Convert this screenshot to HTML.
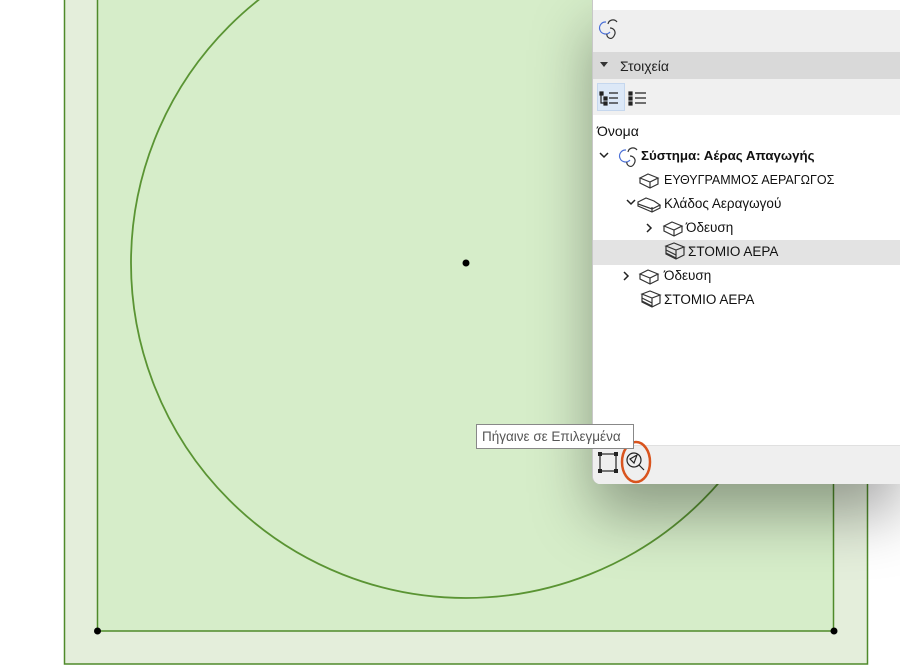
<!DOCTYPE html>
<html><head><meta charset="utf-8"><style>
*{margin:0;padding:0;box-sizing:border-box}
body{width:900px;height:672px;overflow:hidden;background:#fff;position:relative;font-family:"Liberation Sans","DejaVu Sans",sans-serif;font-size:13px;color:#111}
.a{position:absolute}
.t{position:absolute;white-space:nowrap;line-height:16px}
</style></head><body>
<svg class="a" style="left:0;top:0" width="900" height="672">
<rect x="64.5" y="-2" width="803" height="666" fill="#e4eedb" stroke="#4f8a2a" stroke-width="1.5"/>
<rect x="97.5" y="-2" width="736" height="633" fill="#d6edc9" stroke="#4f8a2a" stroke-width="1.5"/>
<circle cx="466" cy="263" r="335" fill="none" stroke="#5a9433" stroke-width="1.8"/>
<circle cx="466" cy="263" r="3.5" fill="#000"/>
<circle cx="97.5" cy="631" r="3.5" fill="#000"/>
<circle cx="834" cy="631" r="3.5" fill="#000"/>
</svg>
<div class="a" style="left:592px;top:0;width:308px;height:484px;background:#fff;border-bottom-left-radius:8px;border-left:1px solid #c8c8c8;overflow:hidden;box-shadow:0 30px 60px rgba(0,0,0,0.35)">
 <div class="a" style="left:0;top:10px;width:308px;height:42px;background:#efefef"></div>
 <div class="a" style="left:0;top:52px;width:308px;height:27px;background:#d9d9d9"></div>
 <div class="a" style="left:0;top:79px;width:308px;height:36px;background:#f0f0f0"></div>
 <div class="a" style="left:0;top:240px;width:308px;height:25px;background:#e3e3e3"></div>
 <div class="a" style="left:0;top:445px;width:308px;height:39px;background:#efefef;border-top:1px solid #e0e0e0"></div>
 <div class="a" style="left:4px;top:83px;width:28px;height:28px;background:#dce8f7;border:1px solid #c5d7ee"></div>
</div>
<svg class="a" style="left:592px;top:0" width="308" height="484" fill="none" stroke="#333" stroke-width="1.2">
 <g stroke="#4a6fd6"><path d="M14 22a6 6 0 1 0 4 10"/></g><path d="M16 24a5 5 0 0 1 9-2M18 28c3 0 7 3 4 8s-8 1-7-2"/>
 <path d="M8 62l8 0-4 5z" fill="#333" stroke="none"/>
 <g stroke="#222"><rect x="8" y="92" width="3" height="3" fill="#222"/><rect x="12" y="97" width="3" height="3" fill="#222"/><rect x="12" y="102" width="3" height="3" fill="#222"/><path d="M9 95v8h3M17 93h9M17 98h9M17 103h9"/>
 <rect x="37" y="92" width="3" height="3" fill="#222"/><rect x="37" y="97" width="3" height="3" fill="#222"/><rect x="37" y="102" width="3" height="3" fill="#222"/><path d="M43 93h11M43 98h11M43 103h11"/></g>
 <path d="M8 153l4 4 4-4M35 200l4 4 4-4M55 224l4 4-4 4M32 272l4 4-4 4" stroke="#222" stroke-width="1.5"/>
 <g stroke="#4a6fd6"><path d="M34 150a6 6 0 1 0 4 10"/></g><path d="M36 152a5 5 0 0 1 9-2M38 156c3 0 7 3 4 8s-8 1-7-2"/>
 <g stroke="#333"><path d="M48 178l8-4 10 4-8 4zM48 178v5l10 5 8-4v-6M58 182v6"/>
 <path d="M46 202l8-4 8 3 6 4-8 4-14-5zM46 202v4l14 6 8-4v-3M60 207v5"/>
 <path d="M72 226l8-4 10 4-8 4zM72 226v5l10 5 8-4v-6M82 230v6"/>
 <path d="M74 246l8-3 10 4-8 3zM74 246v8l10 5 8-4v-8M84 250v9M74 250l10 5M74 253l10 5"/>
 <path d="M48 274l8-4 10 4-8 4zM48 274v5l10 5 8-4v-6M58 278v6"/>
 <path d="M50 294l8-3 10 4-8 3zM50 294v8l10 5 8-4v-8M60 298v9M50 298l10 5M50 301l10 5"/></g>
 <rect x="8" y="454" width="16" height="17" stroke="#222"/>
 <g fill="#222" stroke="none"><rect x="6" y="452" width="4" height="4"/><rect x="22" y="452" width="4" height="4"/><rect x="6" y="469" width="4" height="4"/><rect x="22" y="469" width="4" height="4"/></g>
 <circle cx="42" cy="460" r="7" stroke="#222"/><path d="M47 465l5 5M38 459l7-4-3 8z" stroke="#222"/>
 <ellipse cx="44" cy="462" rx="14" ry="20" stroke="#d9541e" stroke-width="2.5"/>
</svg>
<div class="t" style="left:620px;top:58px;color:#222;font-size:14px">Στοιχεία</div>
<div class="t" style="left:597px;top:123px;font-size:14px">Όνομα</div>
<div class="t" style="left:641px;top:148px;font-weight:bold;font-size:13.3px">Σύστημα: Αέρας Απαγωγής</div>
<div class="t" style="left:664px;top:172px;font-size:12.5px">ΕΥΘΥΓΡΑΜΜΟΣ ΑΕΡΑΓΩΓΟΣ</div>
<div class="t" style="left:664px;top:196px;font-size:13.5px">Κλάδος Αεραγωγού</div>
<div class="t" style="left:686px;top:220px;font-size:13.5px">Όδευση</div>
<div class="t" style="left:688px;top:244px;font-size:13.5px">ΣΤΟΜΙΟ ΑΕΡΑ</div>
<div class="t" style="left:664px;top:268px;font-size:13.5px">Όδευση</div>
<div class="t" style="left:664px;top:292px;font-size:13.5px">ΣΤΟΜΙΟ ΑΕΡΑ</div>
<div class="a" style="left:476px;top:424px;width:158px;height:25px;background:#fff;border:1px solid #888;padding:3px 5px;color:#555;white-space:nowrap;font-size:13.5px;line-height:17px">Πήγαινε σε Επιλεγμένα</div>
</body></html>
